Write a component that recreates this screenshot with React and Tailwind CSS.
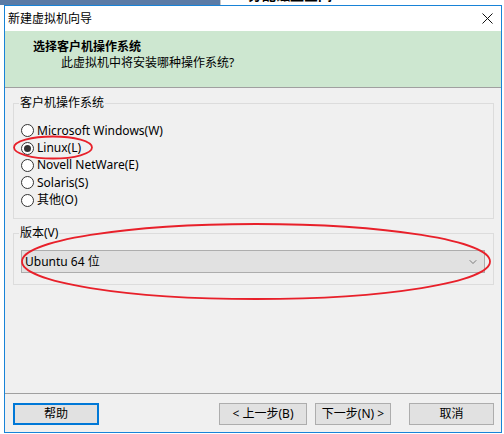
import { ChevronDown } from 'lucide-react'

const font = { fontFamily: '"Noto Sans", "Noto Sans CJK SC", sans-serif' }

function Radio({ label, checked }) {
  return (
    <div className="flex items-center h-[17.4px]">
      <span className="w-[13px] h-[13px] rounded-full border border-[#333] bg-white flex items-center justify-center">
        {checked && <span className="w-[7px] h-[7px] rounded-full bg-[#333]" />}
      </span>
      <span className="ml-[3px] text-[12px] text-black leading-none">{label}</span>
    </div>
  )
}

function Group({ title, className, children }) {
  return (
    <div className={'relative border border-[#dcdcdc] ' + className}>
      <span className="absolute -top-[9px] left-[5px] bg-[#f0f0f0] px-[1px] text-[12px] leading-[16px] text-black">
        {title}
      </span>
      {children}
    </div>
  )
}

function Btn({ children, w, primary }) {
  return (
    <button
      className={
        'h-[22px] bg-[#e1e1e1] text-[12px] text-black flex items-center justify-center ' +
        (primary ? 'border-2 border-[#0078d7] ' : 'border border-[#adadad] ') +
        w
      }
    >
      {children}
    </button>
  )
}

export default function App() {
  return (
    <div className="relative w-[504px] h-[434px] bg-white overflow-hidden" style={font}>
      {/* desktop strip */}
      <div className="flex h-[5px]">
        <div className="w-[220px] bg-[#5b7ba6]" />
        <div className="w-px bg-[#c8c8c8]" />
        <div className="flex-1 bg-white overflow-hidden">
          <div className="ml-[27px] -mt-[13px] text-[14px] font-bold text-black leading-[16px]">分配磁盘空间</div>
        </div>
      </div>

      {/* dialog */}
      <div className="ml-[4px] w-[498px] h-[428px] border border-[#1883d7] flex flex-col bg-[#f0f0f0]">
        <div className="h-[25px] bg-white flex items-center justify-between pl-[3px] pr-[8px]">
          <span className="text-[12px] text-black">新建虚拟机向导</span>
          <svg width="11" height="11" viewBox="0 0 11 11">
            <path d="M0.5 0.5L10.5 10.5M10.5 0.5L0.5 10.5" stroke="#111" strokeWidth="1" />
          </svg>
        </div>
        <div className="h-[57px] bg-[#cde7d0] border-b border-[#a0a0a0] flex flex-col">
          <div className="pl-[28px] pt-[8px] text-[12px] font-bold text-black leading-[16px]">选择客户机操作系统</div>
          <div className="pl-[56px] pt-[0px] text-[12px] text-black leading-[16px]">此虚拟机中将安装哪种操作系统?</div>
        </div>

        <div className="flex-1 flex flex-col">
          <div className="flex-1 pl-[8px] pr-[7px] pt-[15px]">
            <Group title="客户机操作系统" className="h-[116px] pl-[7px] pt-[18px]">
              <Radio label="Microsoft Windows(W)" />
              <Radio label="Linux(L)" checked />
              <Radio label="Novell NetWare(E)" />
              <Radio label="Solaris(S)" />
              <Radio label="其他(O)" />
            </Group>
            <Group title="版本(V)" className="mt-[14px] h-[52px] pl-[7px] pr-[8px] pt-[16px]">
              <div className="h-[23px] bg-[#e1e1e1] border border-[#adadad] flex items-center justify-between pl-[3px] pr-[5px]">
                <span className="text-[12px] text-black">Ubuntu 64 位</span>
                <ChevronDown size={12} strokeWidth={1.3} color="#444" />
              </div>
            </Group>
          </div>
          <div className="h-px bg-[#a0a0a0]" />
          <div className="h-[38px] flex items-start justify-between pl-[8px] pr-[7px] pt-[9px]">
            <Btn w="w-[86px]" primary>帮助</Btn>
            <div className="flex">
              <Btn w="w-[88px]">&lt; 上一步(B)</Btn>
              <div className="w-[8px]" />
              <Btn w="w-[76px]">下一步(N) &gt;</Btn>
              <div className="w-[18px]" />
              <Btn w="w-[85px]">取消</Btn>
            </div>
          </div>
        </div>
      </div>

      {/* red annotation ellipses */}
      <svg className="absolute left-0 top-0 pointer-events-none" width="504" height="434">
        <ellipse cx="53" cy="147.5" rx="39" ry="11" fill="none" stroke="#e8202a" strokeWidth="1.8" />
        <ellipse cx="256" cy="261.5" rx="234" ry="37.5" fill="none" stroke="#e8202a" strokeWidth="1.8" />
      </svg>
    </div>
  )
}
